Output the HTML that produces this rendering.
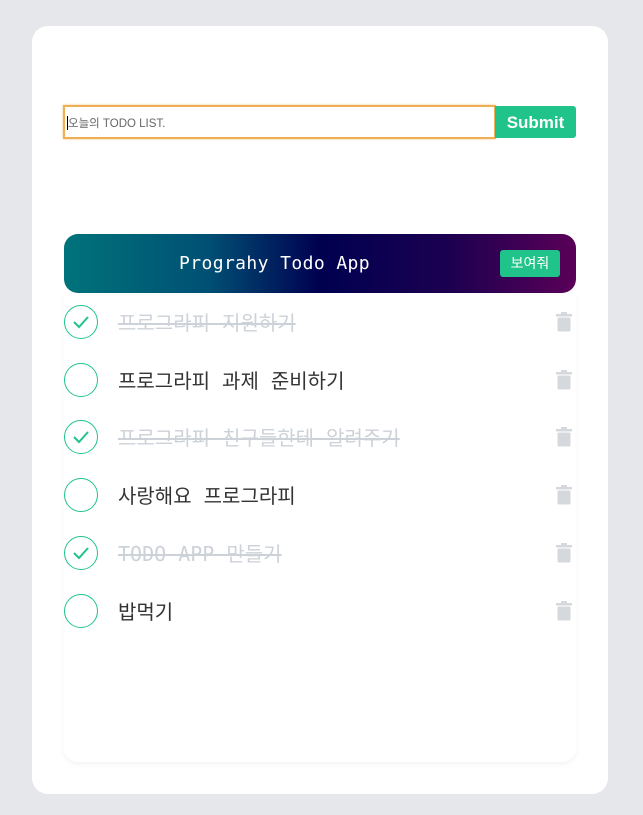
<!DOCTYPE html>
<html><head><meta charset="utf-8"><style>
*{margin:0;padding:0;box-sizing:border-box}
body{width:643px;height:815px;background:#e5e7eb;font-family:"Liberation Sans","Noto Sans CJK KR",sans-serif;position:relative;overflow:hidden}
.card{position:absolute;left:32px;top:26px;width:576px;height:768px;background:#fff;border-radius:16px}
.inp{position:absolute;left:63px;top:105px;width:433px;height:34px;border:2px solid #eeb052;box-shadow:0 0 2px #f3c27a;background:#fff;font-size:11.5px;color:#666;padding:8px 0 0 3px}
.inp:before{content:"";position:absolute;left:2px;top:9px;width:1px;height:14px;background:#000}
.sub{position:absolute;left:495px;top:106px;width:81px;height:32px;background:#20c38a;color:#fff;font-weight:bold;font-size:17px;text-align:center;line-height:34px;border-radius:0 3px 3px 0}
.hdr{position:absolute;left:64px;top:234px;width:512px;height:59px;border-radius:14px;background:linear-gradient(90deg,#00737a 0%,#005074 28%,#000050 50%,#1c0050 75%,#5a0058 100%)}
.hdr .t{position:absolute;left:115px;top:19px;color:#fff;font-family:"DejaVu Sans Mono",monospace;font-size:18px;letter-spacing:0.4px}
.hdr .b{position:absolute;left:436px;top:16px;width:60px;height:27px;background:#20c38a;color:#fff;border-radius:3px;font-size:14px;text-align:center;line-height:27px}
.list{position:absolute;left:64px;top:293px;width:512px;height:469px;background:#fff;border-radius:0 0 14px 14px;box-shadow:0 2px 6px rgba(0,0,0,.05)}
.row{position:absolute;left:0;width:512px;height:36px}
.c{position:absolute;left:0;top:0;width:34px;height:34px;border:1px solid #20c38a;border-radius:50%}
.tx{position:absolute;left:54px;top:2px;font-family:"DejaVu Sans Mono","Noto Sans CJK KR",monospace;font-size:20px;color:#333;white-space:pre}
.done .tx{color:#ccd2d8;text-decoration:line-through}
.tr{position:absolute;left:492px;top:7px}
</style></head><body>
<div class="card"></div>
<div class="inp">오늘의 TODO LIST.</div>
<div class="sub">Submit</div>
<div class="hdr"><span class="t">Prograhy Todo App</span><span class="b">보여줘</span></div>
<div class="list">
<div class="row done" style="top:12px"><div class="c"><svg width="34" height="34" style="position:absolute;left:-1px;top:-1px"><path d="M10 17l5 5 9-10" fill="none" stroke="#20c38a" stroke-width="2"/></svg></div><span class="tx">프로그라피 지원하기</span><svg class="tr" width="16" height="20"><rect x="0" y="2" width="16" height="2.5" fill="#d5d8dc"/><rect x="5" y="0" width="6" height="3" fill="#d5d8dc"/><rect x="1.5" y="5.5" width="13" height="14" rx="1.5" fill="#d5d8dc"/></svg></div>
<div class="row" style="top:70px"><div class="c"></div><span class="tx">프로그라피 과제 준비하기</span><svg class="tr" width="16" height="20"><rect x="0" y="2" width="16" height="2.5" fill="#d5d8dc"/><rect x="5" y="0" width="6" height="3" fill="#d5d8dc"/><rect x="1.5" y="5.5" width="13" height="14" rx="1.5" fill="#d5d8dc"/></svg></div>
<div class="row done" style="top:127px"><div class="c"><svg width="34" height="34" style="position:absolute;left:-1px;top:-1px"><path d="M10 17l5 5 9-10" fill="none" stroke="#20c38a" stroke-width="2"/></svg></div><span class="tx">프로그라피 친구들한테 알려주기</span><svg class="tr" width="16" height="20"><rect x="0" y="2" width="16" height="2.5" fill="#d5d8dc"/><rect x="5" y="0" width="6" height="3" fill="#d5d8dc"/><rect x="1.5" y="5.5" width="13" height="14" rx="1.5" fill="#d5d8dc"/></svg></div>
<div class="row" style="top:185px"><div class="c"></div><span class="tx">사랑해요 프로그라피</span><svg class="tr" width="16" height="20"><rect x="0" y="2" width="16" height="2.5" fill="#d5d8dc"/><rect x="5" y="0" width="6" height="3" fill="#d5d8dc"/><rect x="1.5" y="5.5" width="13" height="14" rx="1.5" fill="#d5d8dc"/></svg></div>
<div class="row done" style="top:243px"><div class="c"><svg width="34" height="34" style="position:absolute;left:-1px;top:-1px"><path d="M10 17l5 5 9-10" fill="none" stroke="#20c38a" stroke-width="2"/></svg></div><span class="tx">TODO APP 만들기</span><svg class="tr" width="16" height="20"><rect x="0" y="2" width="16" height="2.5" fill="#d5d8dc"/><rect x="5" y="0" width="6" height="3" fill="#d5d8dc"/><rect x="1.5" y="5.5" width="13" height="14" rx="1.5" fill="#d5d8dc"/></svg></div>
<div class="row" style="top:301px"><div class="c"></div><span class="tx">밥먹기</span><svg class="tr" width="16" height="20"><rect x="0" y="2" width="16" height="2.5" fill="#d5d8dc"/><rect x="5" y="0" width="6" height="3" fill="#d5d8dc"/><rect x="1.5" y="5.5" width="13" height="14" rx="1.5" fill="#d5d8dc"/></svg></div>
</div>
</body></html>
